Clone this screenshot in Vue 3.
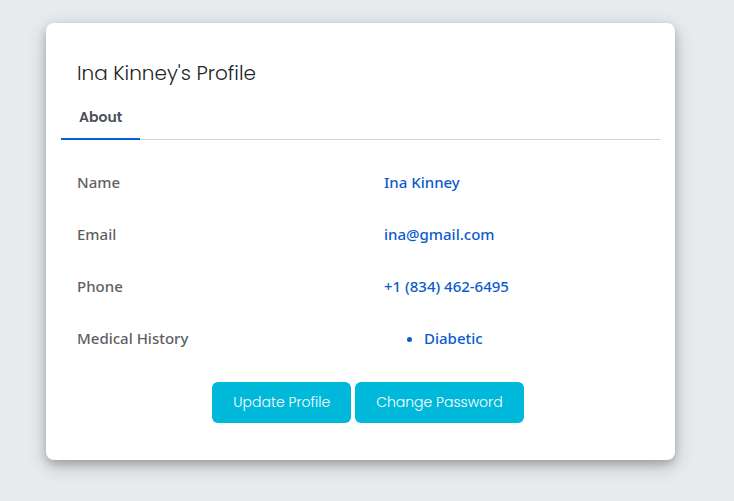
<script setup>
const details = [
  { label: 'Name', value: 'Ina Kinney' },
  { label: 'Email', value: 'ina@gmail.com' },
  { label: 'Phone', value: '+1 (834) 462-6495' },
]
const history = ['Diabetic']
</script>

<template>
  <main class="page">
    <section class="card">
      <h1 class="title">Ina Kinney's Profile</h1>
      <nav class="tabs">
        <a class="tab" href="#about">About</a>
      </nav>
      <dl id="about" class="details">
        <div v-for="item in details" :key="item.label" class="row">
          <dt>{{ item.label }}</dt>
          <dd>{{ item.value }}</dd>
        </div>
        <div class="row">
          <dt>Medical History</dt>
          <dd>
            <ul class="history">
              <li v-for="entry in history" :key="entry">{{ entry }}</li>
            </ul>
          </dd>
        </div>
      </dl>
      <div class="actions">
        <button type="button">Update Profile</button>
        <button type="button">Change Password</button>
      </div>
    </section>
  </main>
</template>

<style>
body {
  margin: 0;
  background: #e7ebee;
}
</style>

<style scoped>
.page {
  padding: 23px 59px 41px 46px;
  font-family: Poppins, "Noto Sans", sans-serif;
}
.card {
  padding: 35px 0 37px 15px;
  border-radius: 8px;
  background: #fff;
  box-shadow: 0 4px 8px rgba(0, 0, 0, 0.2), 0 6px 20px rgba(0, 0, 0, 0.19);
}
.title {
  margin: 0;
  padding: 0 16px;
  font-size: 20px;
  line-height: 30px;
  font-weight: 300;
  color: #212529;
}
.tabs {
  display: flex;
  margin: 7px 15px 0 0;
  border-bottom: 1px solid #d0d3d6;
}
.tab {
  padding: 10px 18px 9px;
  margin-bottom: -1px;
  border-bottom: 2px solid #0062cc;
  font-family: "Poppins SemiBold", Poppins, "Noto Sans", sans-serif;
  font-size: 14px;
  line-height: 24px;
  font-weight: 600;
  color: #495057;
  text-decoration: none;
}
.details {
  margin: 30px 0 0;
  font-family: "Noto Sans", sans-serif;
  font-size: 15px;
  line-height: 24px;
  font-weight: 500;
}
.row {
  display: grid;
  grid-template-columns: 1fr 1fr;
  margin-bottom: 28px;
}
dt {
  padding: 0 16px;
  color: #5f5f64;
}
dd {
  margin: 0;
  padding: 0 16px;
  color: #0b5ccc;
}
.history {
  margin: 0;
  padding-left: 40px;
}
.actions {
  display: flex;
  justify-content: center;
  gap: 4px;
  margin-top: 32px;
}
button {
  padding: 8px 21px;
  border: 0;
  border-radius: 6px;
  background: #00b8d9;
  color: #fff;
  font-family: inherit;
  font-size: 14px;
  font-weight: 300;
  line-height: 25px;
}
</style>
